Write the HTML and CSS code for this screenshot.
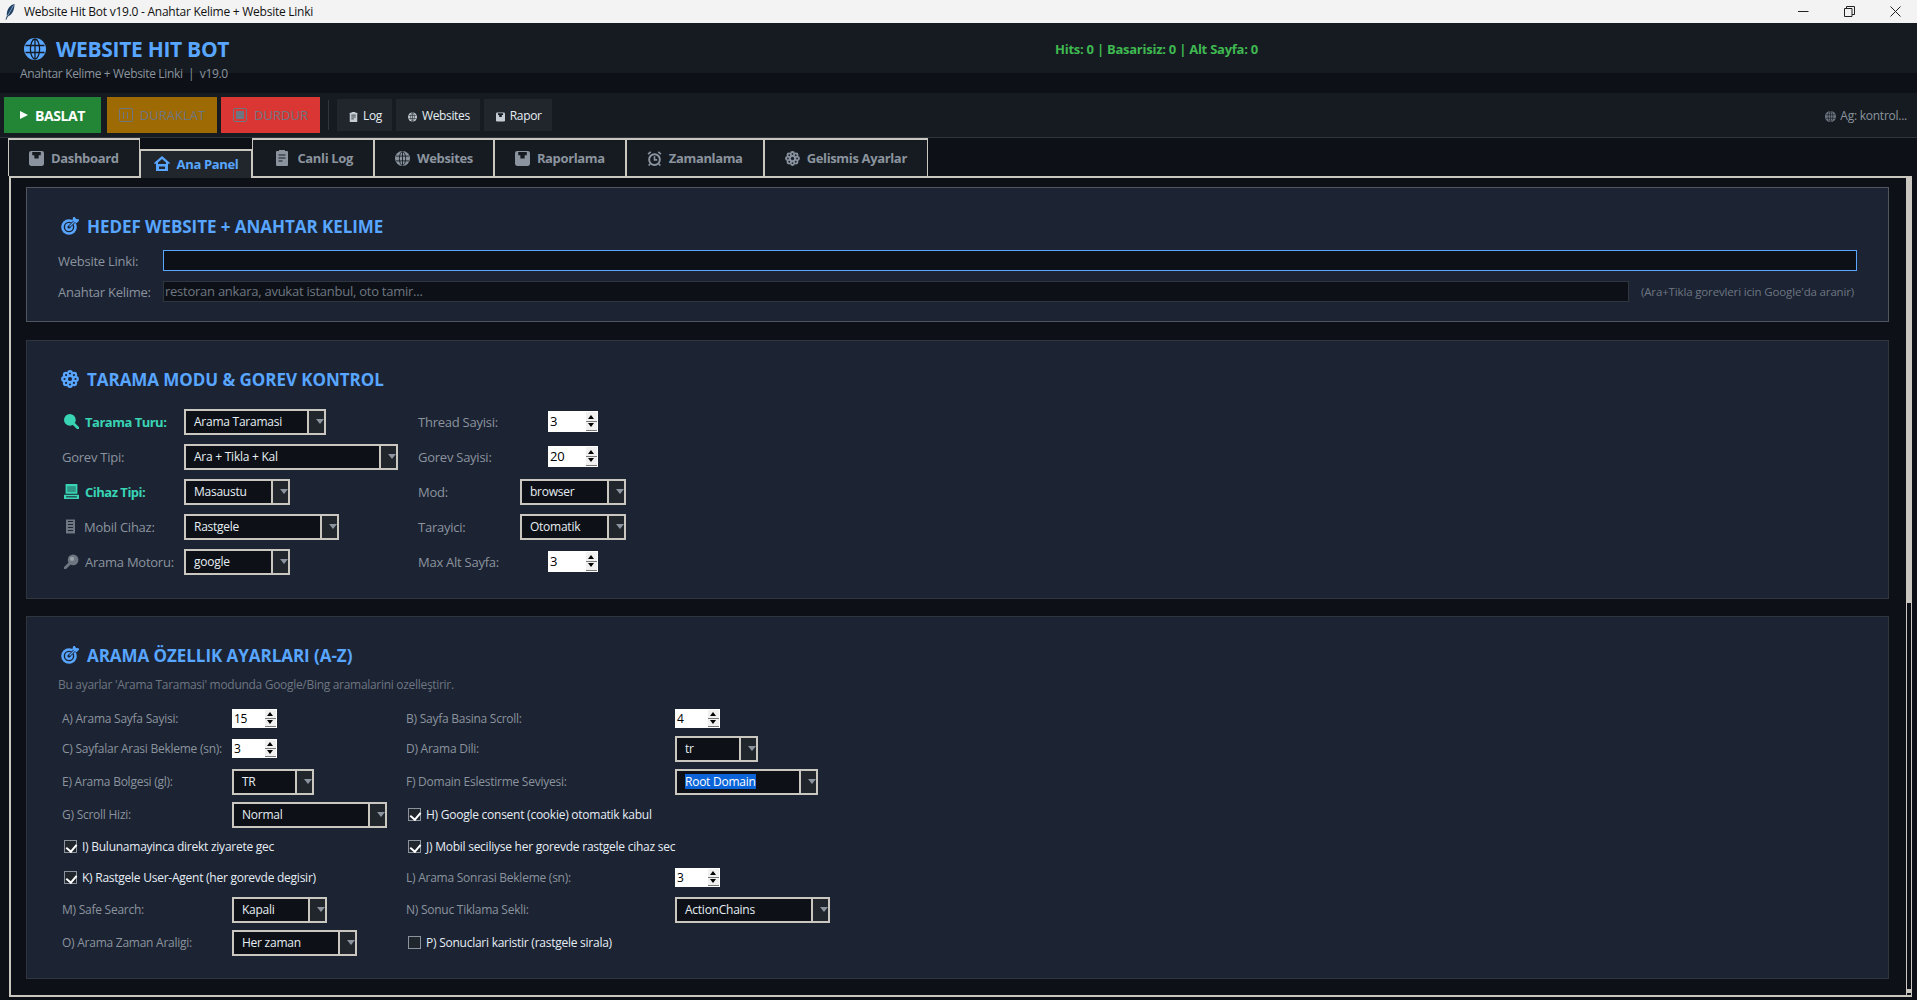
FILE: index.html
```html
<!DOCTYPE html>
<html>
  <head>
    <meta charset="UTF-8">
    <meta name="viewport" content="width=device-width, initial-scale=1.0">
    <title>Website Hit Bot v19.0</title>
    <link rel="stylesheet" href="styles.css">
  </head>
  <body>
    <svg class="hidden" width="0" height="0">
      <defs>
        <symbol id="globe" viewBox="0 0 22 22">
          <circle cx="11" cy="11" r="11" fill="currentColor"/>
          <g fill="none" stroke="#161b22" stroke-width="1.3">
            <ellipse cx="11" cy="11" rx="4.6" ry="10"/>
            <path d="M11 1v20M1.5 7.5h19M1.5 14.5h19"/>
          </g>
        </symbol>
        <symbol id="target" viewBox="0 0 18 18">
          <circle cx="8" cy="10" r="7.8" fill="currentColor"/>
          <circle cx="8" cy="10" r="4.6" fill="none" stroke="#1c2333" stroke-width="1.4"/>
          <circle cx="8" cy="10" r="1.6" fill="#1c2333"/>
          <path d="M8 10l6-6" stroke="#1c2333" stroke-width="2.6"/>
          <path d="M8.500 9.500l5.500-5.500M12 3l1-3 1.600 2.400L18 3l-2.500 2.500z" stroke="currentColor" stroke-width="1.200" fill="currentColor"/>
        </symbol>
        <symbol id="gear" viewBox="0 0 18 18">
          <g fill="currentColor">
            <circle cx="9" cy="9" r="6"/>
            <circle cx="15" cy="9" r="2.900"/>
            <circle cx="13.240" cy="13.240" r="2.900"/>
            <circle cx="9" cy="15" r="2.900"/>
            <circle cx="4.760" cy="13.240" r="2.900"/>
            <circle cx="3" cy="9" r="2.900"/>
            <circle cx="4.760" cy="4.760" r="2.900"/>
            <circle cx="9" cy="3" r="2.900"/>
            <circle cx="13.240" cy="4.760" r="2.900"/>
          </g>
          <g fill="#1c2333">
            <circle cx="9" cy="9" r="2"/>
            <circle cx="14.500" cy="9" r="1.100"/>
            <circle cx="12.900" cy="12.900" r="1.100"/>
            <circle cx="9" cy="14.500" r="1.100"/>
            <circle cx="5.100" cy="12.900" r="1.100"/>
            <circle cx="3.500" cy="9" r="1.100"/>
            <circle cx="5.100" cy="5.100" r="1.100"/>
            <circle cx="9" cy="3.500" r="1.100"/>
            <circle cx="12.900" cy="5.100" r="1.100"/>
          </g>
        </symbol>
        <symbol id="disk" viewBox="0 0 14 14">
          <rect width="14" height="14" rx="2" fill="currentColor"/>
          <path d="M3 1h8v3H9v3H5V4H3z" fill="#161b22"/>
        </symbol>
        <symbol id="clip" viewBox="0 0 12 16">
          <path d="M1 1h10a1 1 0 0 1 1 1v13a1 1 0 0 1-1 1H1a1 1 0 0 1-1-1V2a1 1 0 0 1 1-1z" fill="currentColor"/>
          <path d="M3 0h6v3H3z" fill="currentColor"/>
          <path d="M2.500 5h7M2.500 8h7M2.500 11h4" stroke="#161b22" stroke-width="1.200"/>
        </symbol>
        <symbol id="clock" viewBox="0 0 14 14">
          <circle cx="7" cy="8" r="5" fill="none" stroke="currentColor" stroke-width="1.800"/>
          <path d="M7 5v3.300h2.500M1 3l2.500-2.200M13 3L10.500.8M3 12l-1.500 1.500M11 12l1.500 1.500" fill="none" stroke="currentColor" stroke-width="1.500"/>
        </symbol>
      </defs>
    </svg>

    <div class="titlebar">
      <svg class="feather" viewBox="0 0 10 16" width="10" height="16">
        <path d="M9.500 0C5 1 1.500 5 1.800 12L.5 15.500l.8.300L2.800 12.500C7 11 9.500 6 9.500 0z" fill="#1d3f63"/>
        <path d="M8.500 1.500L2.500 12" stroke="#cfe3f5" stroke-width=".6"/>
      </svg>
      <span class="title-text">Website Hit Bot v19.0 - Anahtar Kelime + Website Linki</span>
      <div class="window-btns">
        <svg viewBox="0 0 11 11" width="11" height="11"><path d="M0 5.500h10.500" stroke="#222" fill="none"/></svg>
        <svg viewBox="0 0 11 11" width="11" height="11"><path d="M.5 2.500h7.500v8H.5zM2.500 2.500V.5h8v8H8" stroke="#222" fill="none"/></svg>
        <svg viewBox="0 0 11 11" width="11" height="11"><path d="M.5.500l10 10M10.500.5l-10 10" stroke="#222" fill="none"/></svg>
      </div>
    </div>

    <header class="app-header">
      <div class="brand-row">
        <div class="brand">
          <svg class="brand-icon"><use href="#globe"/></svg>
          <h1>WEBSITE HIT BOT</h1>
        </div>
        <div class="stats">Hits: 0 | Basarisiz: 0 | Alt Sayfa: 0</div>
      </div>
      <p class="subtitle">Anahtar Kelime + Website Linki &nbsp;|&nbsp; v19.0</p>
    </header>

    <div class="toolbar">
      <button class="btn btn-green"><span class="play"></span>BASLAT</button>
      <button class="btn btn-orange"><span class="btn-glyph"><i class="pause"></i></span>DURAKLAT</button>
      <button class="btn btn-red"><span class="btn-glyph"><i class="stop"></i></span>DURDUR</button>
      <div class="tool-sep"></div>
      <button class="tool-btn"><svg class="tool-icon"><use href="#clip"/></svg>Log</button>
      <button class="tool-btn"><svg class="tool-icon"><use href="#globe"/></svg>Websites</button>
      <button class="tool-btn"><svg class="tool-icon"><use href="#disk"/></svg>Rapor</button>
      <div class="net"><svg class="tool-icon"><use href="#globe"/></svg>Ag: kontrol...</div>
    </div>

    <div class="tabs">
      <div class="tab"><svg class="tab-icon"><use href="#disk"/></svg>Dashboard</div>
      <div class="tab tab-active">
        <svg class="tab-icon tab-icon-home" viewBox="0 0 16 15">
          <path d="M8 0L0 7l1 1.200 1-.9V15h12V7.300l1 .9L16 7zM5 13v-2.500h6V13z" fill="currentColor"/>
          <path d="M8 3L4 6.500V8h8V6.500z" fill="#21262d"/>
        </svg>
        Ana Panel
      </div>
      <div class="tab"><svg class="tab-icon tab-icon-thin"><use href="#clip"/></svg>Canli Log</div>
      <div class="tab"><svg class="tab-icon"><use href="#globe"/></svg>Websites</div>
      <div class="tab"><svg class="tab-icon"><use href="#disk"/></svg>Raporlama</div>
      <div class="tab"><svg class="tab-icon"><use href="#clock"/></svg>Zamanlama</div>
      <div class="tab"><svg class="tab-icon"><use href="#gear"/></svg>Gelismis Ayarlar</div>
    </div>

    <main class="panel">
      <div class="panel-body">

        <section class="card card-target">
          <h2 class="card-title"><svg class="card-icon"><use href="#target"/></svg>HEDEF WEBSITE + ANAHTAR KELIME</h2>
          <div class="url-row">
            <label class="field-label url-label">Website Linki:</label>
            <div class="text-input text-input-focus"></div>
          </div>
          <div class="url-row keyword-row">
            <label class="field-label url-label">Anahtar Kelime:</label>
            <div class="text-input placeholder">restoran ankara, avukat istanbul, oto tamir...</div>
            <span class="hint">(Ara+Tikla gorevleri icin Google'da aranir)</span>
          </div>
        </section>

        <section class="card card-mode">
          <h2 class="card-title"><svg class="card-icon"><use href="#gear"/></svg>TARAMA MODU &amp; GOREV KONTROL</h2>
          <div class="mode-grid">
            <label class="field-label label-accent">
              <svg class="label-icon" viewBox="0 0 14 14"><circle cx="5.500" cy="5.500" r="5.500" fill="currentColor"/><path d="M9 9l4 4" stroke="currentColor" stroke-width="2.600" stroke-linecap="round"/></svg>
              Tarama Turu:
            </label>
            <div class="combo w-142"><span>Arama Taramasi</span></div>
            <label class="field-label">Thread Sayisi:</label>
            <div class="spin"><span>3</span><i class="arrows"></i></div>

            <label class="field-label">Gorev Tipi:</label>
            <div class="combo w-214"><span>Ara + Tikla + Kal</span></div>
            <label class="field-label">Gorev Sayisi:</label>
            <div class="spin"><span>20</span><i class="arrows"></i></div>

            <label class="field-label label-accent">
              <svg class="label-icon" viewBox="0 0 14 14"><path d="M1.500 0h11v9h-11zM0 10h14v4H0z" fill="currentColor"/><path d="M3 2h8v5.500H3z" fill="#1c2333" opacity=".35"/><path d="M2 12h10" stroke="#1c2333"/></svg>
              Cihaz Tipi:
            </label>
            <div class="combo w-106"><span>Masaustu</span></div>
            <label class="field-label">Mod:</label>
            <div class="combo w-106"><span>browser</span></div>

            <label class="field-label label-dim">
              <svg class="label-icon label-icon-phone" viewBox="0 0 9 14"><path d="M0 0h9v14H0z" fill="currentColor"/><path d="M2 2h5M2 5h5M2 8h5M2 11h5" stroke="#1c2333"/></svg>
              Mobil Cihaz:
            </label>
            <div class="combo w-155"><span>Rastgele</span></div>
            <label class="field-label">Tarayici:</label>
            <div class="combo w-106"><span>Otomatik</span></div>

            <label class="field-label label-dim">
              <svg class="label-icon" viewBox="0 0 14 14"><circle cx="8.500" cy="5.500" r="5" fill="currentColor"/><circle cx="7.500" cy="4.500" r="2" fill="#9aa1a8"/><path d="M5 9l-4 4" stroke="currentColor" stroke-width="2.600" stroke-linecap="round"/></svg>
              Arama Motoru:
            </label>
            <div class="combo w-106"><span>google</span></div>
            <label class="field-label">Max Alt Sayfa:</label>
            <div class="spin"><span>3</span><i class="arrows"></i></div>
          </div>
        </section>

        <section class="card card-search">
          <h2 class="card-title"><svg class="card-icon"><use href="#target"/></svg>ARAMA ÖZELLIK AYARLARI (A-Z)</h2>
          <p class="card-note">Bu ayarlar 'Arama Taramasi' modunda Google/Bing aramalarini ozelleştirir.</p>
          <div class="search-grid">
            <label class="field-label">A) Arama Sayfa Sayisi:</label>
            <div class="spin spin-small"><span>15</span><i class="arrows"></i></div>
            <label class="field-label">B) Sayfa Basina Scroll:</label>
            <div class="spin spin-small"><span>4</span><i class="arrows"></i></div>

            <label class="field-label">C) Sayfalar Arasi Bekleme (sn):</label>
            <div class="spin spin-small"><span>3</span><i class="arrows"></i></div>
            <label class="field-label">D) Arama Dili:</label>
            <div class="combo w-83"><span>tr</span></div>

            <label class="field-label">E) Arama Bolgesi (gl):</label>
            <div class="combo w-82"><span>TR</span></div>
            <label class="field-label">F) Domain Eslestirme Seviyesi:</label>
            <div class="combo w-143"><span class="selected">Root Domain</span></div>

            <label class="field-label">G) Scroll Hizi:</label>
            <div class="combo w-155"><span>Normal</span></div>
            <label class="check check-wide"><i class="box box-on"></i>H) Google consent (cookie) otomatik kabul</label>

            <label class="check check-span"><i class="box box-on"></i>I) Bulunamayinca direkt ziyarete gec</label>
            <label class="check check-wide"><i class="box box-on"></i>J) Mobil seciliyse her gorevde rastgele cihaz sec</label>

            <label class="check check-span"><i class="box box-on"></i>K) Rastgele User-Agent (her gorevde degisir)</label>
            <label class="field-label">L) Arama Sonrasi Bekleme (sn):</label>
            <div class="spin spin-small"><span>3</span><i class="arrows"></i></div>

            <label class="field-label">M) Safe Search:</label>
            <div class="combo w-95"><span>Kapali</span></div>
            <label class="field-label">N) Sonuc Tiklama Sekli:</label>
            <div class="combo w-155"><span>ActionChains</span></div>

            <label class="field-label">O) Arama Zaman Araligi:</label>
            <div class="combo w-125"><span>Her zaman</span></div>
            <label class="check check-wide"><i class="box"></i>P) Sonuclari karistir (rastgele sirala)</label>
          </div>
        </section>
      </div>

      <div class="scrollbar"><div class="scroll-thumb"></div><div class="scroll-end"></div></div>
    </main>
  </body>
</html>
```

FILE: styles.css
```css
/* Variables */
:root {
	--bg-dark: #0d1117;
	--bg-head: #161b22;
	--bg-card: #1c2333;
	--line: #30363d;
	--light-line: #c9c7c0;
	--blue: #58a6ff;
	--teal: #39d4b4;
	--muted: #8b949e;
	--dim: #6e7681;
	--text: #e6edf3;
}

/* Resets */
* {
	margin: 0;
	padding: 0;
	box-sizing: border-box;
}

body {
	width: 1917px;
	height: 1000px;
	overflow: hidden;
	background: var(--bg-dark);
	color: var(--text);
	font-family: "Open Sans", "Noto Sans", sans-serif;
	font-size: 12px;
	letter-spacing: -0.25px;
}

.hidden {
	position: absolute;
}

button {
	border: none;
	font-family: inherit;
	letter-spacing: inherit;
}

/* Title bar */
.titlebar {
	height: 23px;
	background: #f3f3f3;
	color: #111;
	display: flex;
	align-items: center;
	padding-left: 5px;
}

.feather {
	margin-right: 9px;
}

.title-text {
	font-size: 12px;
}

.window-btns {
	margin-left: auto;
	display: flex;
	gap: 35px;
	padding-right: 16px;
}

/* Header */
.app-header {
	height: 70px;
	background: linear-gradient(var(--bg-head) 50px, var(--bg-dark) 50px);
}

.brand-row {
	height: 52px;
	display: flex;
	align-items: center;
	padding-left: 24px;
}

.brand {
	display: flex;
	align-items: center;
	width: 1031px;
}

.brand-icon {
	width: 22px;
	height: 22px;
	color: var(--blue);
	margin-right: 10px;
}

h1 {
	font-size: 21px;
	font-weight: 700;
	color: var(--blue);
	letter-spacing: -0.3px;
}

.stats {
	color: #3fb950;
	font-weight: 700;
	font-size: 13px;
}

.subtitle {
	color: var(--muted);
	padding-left: 20px;
	line-height: 12px;
	margin-top: -7px;
	letter-spacing: -0.35px;
}

/* Toolbar */
.toolbar {
	height: 45px;
	background: var(--bg-head);
	border-bottom: 1px solid var(--line);
	display: flex;
	align-items: center;
	padding-left: 4px;
}

.btn {
	height: 36px;
	font-size: 14px;
	font-weight: 700;
	display: flex;
	align-items: center;
	justify-content: center;
	margin-right: 5px;
}

.btn-green {
	width: 97px;
	background: #238636;
	color: #fff;
	margin-right: 6px;
	letter-spacing: -0.4px;
}

.btn-orange,
.btn-red {
	font-size: 13px;
	font-weight: 400;
	color: #6e7681;
	letter-spacing: 0;
}

.btn-orange {
	width: 110px;
	background: #9e6a03;
	margin-right: 4px;
}

.btn-red {
	width: 99px;
	background: #da3633;
}

.play {
	border-left: 8px solid #fff;
	border-top: 4.500px solid transparent;
	border-bottom: 4.500px solid transparent;
	margin-right: 7px;
}

.btn-glyph {
	width: 14px;
	height: 14px;
	border: 1px solid currentColor;
	border-radius: 2px;
	margin-right: 7px;
	display: flex;
	align-items: center;
	justify-content: center;
}

.pause {
	width: 5px;
	height: 7px;
	border-left: 1px solid currentColor;
	border-right: 1px solid currentColor;
}

.stop {
	width: 8px;
	height: 8px;
	background: currentColor;
}

.tool-sep {
	width: 1px;
	height: 30px;
	background: var(--line);
	margin: 0 8px 0 3px;
}

.tool-btn {
	height: 32px;
	padding: 0 10px 0 12px;
	margin-right: 4px;
	background: #21262d;
	color: var(--text);
	font-size: 12px;
	letter-spacing: -0.35px;
	display: flex;
	align-items: center;
	white-space: nowrap;
}

.tool-icon {
	width: 9px;
	height: 10px;
	margin: 3px 5px 0 0;
	color: #c5ccd3;
}

.net {
	margin-left: auto;
	padding-right: 10px;
	color: var(--muted);
	display: flex;
	align-items: center;
}

.net .tool-icon {
	width: 11px;
	height: 11px;
	margin-right: 4px;
	color: var(--dim);
}

/* Tabs */
.tabs {
	height: 38px;
	padding-left: 8px;
	display: flex;
	align-items: flex-end;
}

.tab {
	height: 38px;
	padding: 0 20px;
	background: var(--bg-head);
	border: 2px solid var(--light-line);
	border-left-width: 1px;
	border-right-width: 1px;
	border-bottom: none;
	color: var(--muted);
	font-size: 13px;
	font-weight: 700;
	letter-spacing: -0.35px;
	display: flex;
	align-items: center;
	justify-content: center;
	white-space: nowrap;
}

.tab-active {
	position: relative;
	z-index: 2;
	height: 29px;
	margin-bottom: -2px;
	padding: 0 13px 2px;
	background: #21262d;
	color: var(--blue);
}

.tab-icon {
	width: 15px;
	height: 15px;
	margin-right: 7px;
	color: #8b949e;
}

.tab-icon-home {
	width: 16px;
	height: 15px;
	color: var(--blue);
}

.tab-icon-thin {
	width: 12px;
	height: 16px;
	margin: 0 9px 0 3px;
}

/* Main panel */
.panel {
	position: relative;
	margin-left: 9px;
	width: 1903px;
	height: 821px;
	border: 2px solid var(--light-line);
	border-right: none;
	overflow: hidden;
}

.panel-body {
	padding: 9px 23px 0 15px;
}

.scrollbar {
	position: absolute;
	top: 0;
	right: 0;
	width: 6px;
	height: 100%;
	background: var(--bg-dark);
	border-left: 1px solid var(--light-line);
	border-right: 1px solid var(--light-line);
}

.scroll-thumb {
	height: 425px;
	margin-right: -1px;
	background: #c9c7c0;
}

.scroll-end {
	position: absolute;
	bottom: 2px;
	left: 0;
	width: 4px;
	height: 4px;
	background: #c9c7c0;
}

/* Cards */
.card {
	background: var(--bg-card);
	border: 1px solid var(--line);
	padding: 0 31px;
	margin-bottom: 17px;
}

.card-target {
	height: 135px;
	border-color: #50565e;
	margin-bottom: 18px;
}

.card-mode {
	height: 259px;
}

.card-search {
	height: 363px;
}

.card-title {
	height: 22px;
	margin-top: 27px;
	display: flex;
	align-items: center;
	font-size: 17px;
	font-weight: 700;
	letter-spacing: -0.05px;
	color: var(--blue);
	white-space: nowrap;
}

.card-icon {
	width: 18px;
	height: 18px;
	margin: 0 8px 0 3px;
	color: var(--blue);
}

/* Url rows */
.url-row {
	display: flex;
	align-items: center;
	height: 21px;
	margin-top: 13px;
}

.keyword-row {
	margin-top: 10px;
}

.field-label {
	color: var(--muted);
	white-space: nowrap;
	display: flex;
	align-items: center;
}

.url-label {
	width: 105px;
	font-size: 13px;
}

.text-input {
	height: 21px;
	flex: 1;
	background: var(--bg-dark);
	border: 1px solid var(--line);
	font-size: 13px;
	line-height: 19px;
	padding-left: 1px;
}

.text-input-focus {
	border-color: var(--blue);
}

.placeholder {
	color: var(--dim);
}

.hint {
	width: 228px;
	padding-left: 12px;
	font-size: 11.500px;
	letter-spacing: -0.15px;
	color: var(--dim);
	white-space: nowrap;
}

/* Scan mode grid */
.mode-grid {
	display: grid;
	grid-template-columns: 122px 234px 102px 106px;
	grid-auto-rows: 35px;
	align-items: center;
	margin: 14px 0 0 4px;
}

.mode-grid .field-label {
	font-size: 13px;
}

.mode-grid .label-accent {
	color: var(--teal);
	font-weight: 700;
	letter-spacing: -0.5px;
}

.label-dim {
	color: var(--muted);
}

.label-icon {
	width: 15px;
	height: 15px;
	margin: 0 6px 0 2px;
	flex-shrink: 0;
}

.label-dim .label-icon {
	color: #6e7681;
}

.label-dim .label-icon-phone {
	width: 9px;
	margin: 0 9px 0 4px;
}

/* Combobox */
.combo {
	position: relative;
	height: 26px;
	background: var(--bg-dark);
	border: 2px solid var(--light-line);
	font-size: 12px;
	line-height: 22px;
	padding-left: 8px;
	white-space: nowrap;
}

.combo::before {
	content: "";
	position: absolute;
	top: -2px;
	bottom: -2px;
	right: -2px;
	width: 15px;
	background: #21262d;
	border: 2px solid var(--light-line);
}

.combo::after {
	content: "";
	position: absolute;
	top: 8px;
	right: .5px;
	border-top: 5px solid #8b949e;
	border-left: 4.500px solid transparent;
	border-right: 4.500px solid transparent;
}

.w-82 { width: 82px; }
.w-83 { width: 83px; }
.w-95 { width: 95px; }
.w-106 { width: 106px; }
.w-125 { width: 125px; }
.w-142 { width: 142px; }
.w-143 { width: 143px; }
.w-155 { width: 155px; }
.w-214 { width: 214px; }

.selected {
	background: #0a64d8;
	color: #fff;
	display: inline-block;
	line-height: 15px;
}

/* Spinbox */
.spin {
	position: relative;
	width: 50px;
	height: 21px;
	background: #fff;
	color: #000;
	font-size: 13px;
	line-height: 21px;
	padding-left: 2px;
	justify-self: center;
}

.arrows {
	position: absolute;
	top: 1px;
	bottom: 1px;
	right: 1px;
	width: 11px;
	border-bottom: 1px solid #777;
	background:
		linear-gradient(#777, #777) center / 100% 1px no-repeat,
		#f0f0f0;
}

.arrows::before,
.arrows::after {
	content: "";
	position: absolute;
	left: 2px;
	border-left: 3.500px solid transparent;
	border-right: 3.500px solid transparent;
}

.arrows::before {
	top: 3px;
	border-bottom: 4px solid #000;
}

.arrows::after {
	bottom: 3px;
	border-top: 4px solid #000;
}

.spin-small {
	width: 45px;
	height: 19px;
	margin-top: -1px;
	font-size: 12px;
	line-height: 19px;
	justify-self: start;
}

.spin-small .arrows::before {
	top: 2px;
}

.spin-small .arrows::after {
	bottom: 2px;
}

/* Search options */
.card-note {
	margin-top: 11px;
	font-size: 12px;
	letter-spacing: -0.3px;
	line-height: 16px;
	color: var(--dim);
	height: 16px;
}

.search-grid {
	display: grid;
	grid-template-columns: 170px 174px 269px 160px;
	grid-template-rows: 30px 30px 36px 30px 34px 28px 36px 30px;
	align-items: center;
	margin: 11px 0 0 4px;
	font-size: 12px;
}

.search-grid .field-label,
.check {
	padding-bottom: 2px;
}

.check {
	display: flex;
	align-items: center;
	color: var(--text);
	white-space: nowrap;
	padding-left: 2px;
}

.check-span {
	grid-column: 1 / 3;
}

.check-wide {
	grid-column: 3 / 5;
}

.box {
	width: 13px;
	height: 13px;
	margin-right: 5px;
	background: #21262d;
	border: 1px solid #8b949e;
	position: relative;
	flex-shrink: 0;
}

.box-on::after {
	content: "";
	position: absolute;
	left: 3px;
	top: 1px;
	width: 5px;
	height: 8px;
	border-right: 2px solid #fff;
	border-bottom: 2px solid #fff;
	transform: rotate(40deg);
}
```
